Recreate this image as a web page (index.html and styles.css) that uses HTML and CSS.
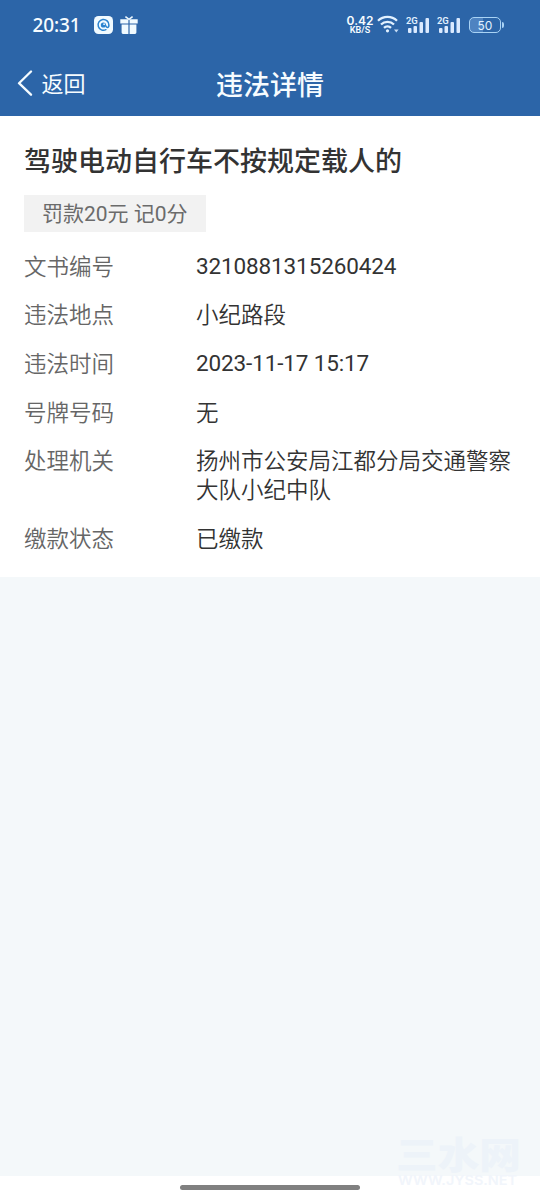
FILE: index.html
```html
<!DOCTYPE html>
<html lang="zh-CN">
<head>
<meta charset="utf-8">
<title>违法详情</title>
<link rel="stylesheet" href="styles.css">
</head>
<body>
<div class="screen">
  <header class="top">
    <div class="status">
      <span class="clock">20:31</span>
      <svg class="app-icon" width="19" height="18" viewBox="0 0 19 18">
        <rect width="19" height="18" rx="4.5" fill="#f0faff"/>
        <path d="M11.9 13.7A5.4 5.4 0 1 1 14.9 9q0 2.4-1.4 2.4T12 10" fill="none" stroke="#2a83cf" stroke-width="1.5" stroke-linecap="round"/>
        <circle cx="9.4" cy="9" r="2.6" fill="#2a83cf"/>
        <circle cx="10.1" cy="8.2" r=".9" fill="#e8f6ff"/>
      </svg>
      <svg class="gift" width="18" height="18" viewBox="0 0 18 18" fill="#f0faff">
        <path d="M.3 3.3h8.1v4.2H.3zM9.6 3.3h8.1v4.2H9.6zM1.6 8.5h6.8V18H3a1.4 1.4 0 0 1-1.4-1.4zM9.6 8.5h6.8v8.1A1.4 1.4 0 0 1 15 18H9.6z"/>
        <path d="M5.4.6 9 3.3 12.6.6" fill="none" stroke="#f0faff" stroke-width="1.6"/>
      </svg>
      <span class="speed"><b>0.42</b><small>KB/S</small></span>
      <svg class="wifi" width="22" height="18" viewBox="0 0 22 18" fill="none" stroke="#e2f1ff" stroke-width="2.3">
        <path d="M1 5.8a13.6 13.6 0 0 1 19 0M4 9.5a9.3 9.3 0 0 1 13 0M7 12.9a5 5 0 0 1 7 0"/>
        <circle cx="10.5" cy="15.8" r="1.6" fill="#e2f1ff" stroke="none"/>
        <path d="M17 14.6h4.6l-2.3 2.8z" fill="#c6dcf4" stroke="none"/>
      </svg>
      <span class="signal"><i>2G</i><svg width="24" height="17" viewBox="0 0 24 17" fill="#dbeaff"><rect x="2" y="11" width="3.5" height="5" rx="1"/><rect x="7.5" y="9" width="3.5" height="7" rx="1"/><rect x="13.5" y="5" width="3.5" height="11" rx="1"/><rect x="19.5" y="1" width="3.5" height="15" rx="1"/></svg></span>
      <span class="signal"><i>2G</i><svg width="24" height="17" viewBox="0 0 24 17" fill="#dbeaff"><rect x="2" y="11" width="3.5" height="5" rx="1"/><rect x="7.5" y="9" width="3.5" height="7" rx="1"/><rect x="13.5" y="5" width="3.5" height="11" rx="1"/><rect x="19.5" y="1" width="3.5" height="15" rx="1"/></svg></span>
      <span class="battery"><span>50</span></span>
    </div>
    <nav class="nav">
      <a class="back">
        <svg width="16" height="26" viewBox="0 0 16 26" fill="none" stroke="#f4fbff" stroke-width="2.3" stroke-linecap="round" stroke-linejoin="round"><path d="M14 1.5 2 13.2 14 24.7"/></svg>
        <span>返回</span>
      </a>
      <h1>违法详情</h1>
    </nav>
  </header>
  <main class="card">
    <h2>驾驶电动自行车不按规定载人的</h2>
    <div class="tag">罚款20元 记0分</div>
    <dl>
      <dt>文书编号</dt><dd class="num">3210881315260424</dd>
      <dt>违法地点</dt><dd>小纪路段</dd>
      <dt>违法时间</dt><dd class="num">2023-11-17 15:17</dd>
      <dt>号牌号码</dt><dd>无</dd>
      <dt>处理机关</dt><dd>扬州市公安局江都分局交通警察大队小纪中队</dd>
      <dt>缴款状态</dt><dd>已缴款</dd>
    </dl>
  </main>
  <footer class="home"><span class="handle"></span></footer>
  <div class="watermark">
    <svg width="132" height="68" viewBox="0 0 132 68">
      <text class="wm-name" x="1" y="44" textLength="125" lengthAdjust="spacingAndGlyphs">三水网</text>
      <text class="wm-url" x="3" y="60" textLength="119" lengthAdjust="spacingAndGlyphs">WWW.JYSS.NET</text>
    </svg>
  </div>
</div>
</body>
</html>
```
FILE: styles.css
```css
* { box-sizing: border-box; margin: 0; padding: 0; }
body { font-family: Roboto, "Noto Sans CJK SC", sans-serif; color: #333; background: #f4f8fa; }
.screen { position: relative; display: flex; flex-direction: column; width: 540px; height: 1200px; overflow: hidden; }
.top { height: 116px; background: #2c65a8; color: #f7fcff; }
.status { display: flex; align-items: center; height: 50px; padding: 0 37px 0 32.5px; }
.clock { width: 61.5px; font: 500 19px/24px "Noto Sans", sans-serif; letter-spacing: -.1px; }
.app-icon { flex: none; }
.gift { flex: none; margin-left: 7px; margin-top: -1px; }
.speed { display: flex; flex-direction: column; align-items: center; width: 26px; margin-left: auto; }
.speed b { font: 600 12px/11px Inter, sans-serif; }
.speed small { font: 600 9px/9px Roboto, sans-serif; }
.wifi { flex: none; margin-left: 4px; margin-top: -2px; }
.signal { position: relative; flex: none; width: 24px; height: 17px; margin-left: 7px; }
.signal svg { display: block; }
.signal i { position: absolute; left: 0; top: -1px; font: normal 600 9.5px/10px Roboto, sans-serif; letter-spacing: -.3px; color: #e2f1ff; }
.battery { position: relative; display: flex; justify-content: center; align-items: center; width: 32px; height: 16px; margin-left: 8px; margin-right: 2px; border: 1.5px solid #a9d3f5; border-radius: 5px; background: linear-gradient(90deg, #4e83c1 45%, transparent 45%); font: 12px/14px Inter, sans-serif; color: #e2f1ff; }
.battery span { padding-top: 1px; }
.battery::after { content: ""; position: absolute; right: -4px; top: 4px; width: 2px; height: 6px; border-radius: 0 2px 2px 0; background: #a9d3f5; }
.nav { display: grid; grid-template-columns: 120px 1fr 120px; align-items: center; height: 66px; }
.back { display: flex; align-items: center; gap: 8.5px; padding-left: 17px; font-size: 22px; line-height: 30px; }
.back span { padding-top: 3px; }
.nav h1 { padding-top: 5px; font-size: 27px; font-weight: 500; line-height: 36px; text-align: center; }
.card { height: 461px; padding: 27.5px 24px 0; background: #fff; }
.card h2 { font-size: 27px; font-weight: 500; line-height: 36px; white-space: nowrap; }
.tag { width: 182px; height: 37px; margin-top: 15.5px; padding-left: 18px; background: #f2f2f2; color: #6b6b6b; font-size: 21px; line-height: 39px; white-space: nowrap; }
dl { display: grid; grid-template-columns: 172px 1fr; row-gap: 19.35px; margin-top: 20.8px; margin-right: -6px; font-size: 22.5px; font-weight: 350; line-height: 29.25px; }
dt { color: #666; }
.num { margin-top: -1px; font-weight: 400; letter-spacing: -.13px; }
.home { display: flex; justify-content: center; height: 24px; margin-top: auto; padding-top: 9px; background: #fff; }
.handle { width: 180px; height: 5px; border-radius: 3px; background: #808080; }
.watermark { position: absolute; left: 395px; top: 1125px; height: 68px; }
.wm-name { font: 900 37px "Noto Sans CJK SC", sans-serif; fill: #edf3f9; }
.wm-url { font: 600 13px Inter, sans-serif; fill: #f1f5fb; }
```
